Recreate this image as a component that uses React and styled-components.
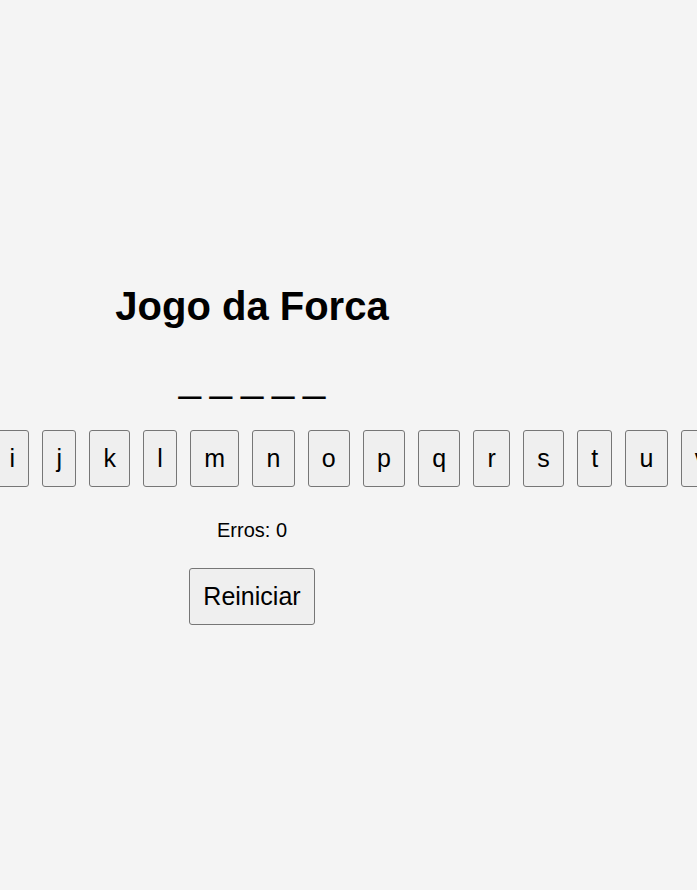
import React, { useState } from 'react'
import styled, { createGlobalStyle } from 'styled-components'

const GlobalStyle = createGlobalStyle`
  body {
    margin: 0;
    padding: 8px;
    min-height: 100vh;
    display: flex;
    align-items: center;
    background-color: #f4f4f4;
    font-family: Arial, "Liberation Sans", sans-serif;
    color: #000;
  }
`

const Game = styled.div`
  width: 488px;
  display: flex;
  flex-direction: column;
  align-items: center;
  text-align: center;
  padding-top: 2px;
`

const Title = styled.h1`
  font-size: 40px;
  font-weight: bold;
  margin: 0 0 26px;
`

const Word = styled.div`
  display: flex;
  gap: 8.8px;
  font-size: 40px;
  margin-bottom: 30px;
`

const Slot = styled.span`
  display: block;
`

const Keyboard = styled.div`
  display: flex;
  gap: 13px;
  margin-bottom: 32px;
`

const Button = styled.button`
  flex-shrink: 0;
  font-family: Arial, "Liberation Sans", sans-serif;
  font-size: 25px;
  padding: 13px 13.2px;
  line-height: normal;
  color: #000;
  background-color: #efefef;
  border: 1px solid #767676;
  border-radius: 3px;
  cursor: pointer;
  :disabled {
    color: #999;
  }
`

const Errors = styled.p`
  font-size: 20px;
  margin: 0 0 26px;
`

const letters = 'abcdefghijklmnopqrstuvwxyz'.split('')
const secret = 'pizza'

const App = () => {
  const [guessed, setGuessed] = useState([])
  const [errors, setErrors] = useState(0)

  const guess = (l) => {
    setGuessed([...guessed, l])
    if (!secret.includes(l)) setErrors(errors + 1)
  }

  const reset = () => {
    setGuessed([])
    setErrors(0)
  }

  return (
    <>
      <GlobalStyle />
      <Game>
        <Title>Jogo da Forca</Title>
        <Word>
          {secret.split('').map((l, i) => (
            <Slot key={i}>{guessed.includes(l) ? l : '_'}</Slot>
          ))}
        </Word>
        <Keyboard>
          {letters.map((l) => (
            <Button key={l} onClick={() => guess(l)}>{l}</Button>
          ))}
        </Keyboard>
        <Errors>Erros: {errors}</Errors>
        <Button onClick={reset}>Reiniciar</Button>
      </Game>
    </>
  )
}

export default App
